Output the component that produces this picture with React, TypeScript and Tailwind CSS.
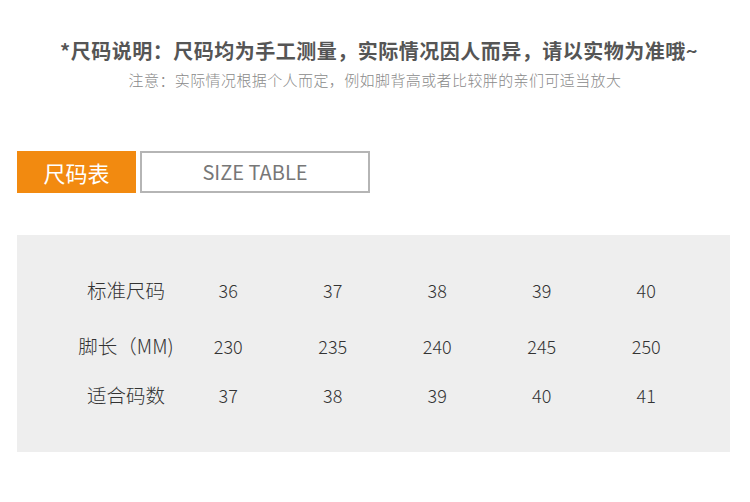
const rows = [
  { label: '标准尺码', values: ['36', '37', '38', '39', '40'], mt: 'mt-0' },
  { label: '脚长（MM)', values: ['230', '235', '240', '245', '250'], mt: 'mt-[26px]' },
  { label: '适合码数', values: ['37', '38', '39', '40', '41'], mt: 'mt-[19px]' },
];

export default function App() {
  return (
    <div
      className="w-[750px] h-[502px] bg-white overflow-hidden"
      style={{ fontFamily: '"Noto Sans CJK SC", "Noto Sans", sans-serif' }}
    >
      {/* Header notes */}
      <div className="pt-[37px] flex flex-col items-center">
        <div className="text-[20px] leading-[28px] font-bold text-[#555555] tracking-[0.5px] pl-[8px]">
          *尺码说明：尺码均为手工测量，实际情况因人而异，请以实物为准哦~
        </div>
        <div className="mt-[3px] text-[15px] leading-[24px] text-[#8a8a8a] tracking-[0.4px] font-light">
          注意：实际情况根据个人而定，例如脚背高或者比较胖的亲们可适当放大
        </div>
      </div>

      {/* Tabs */}
      <div className="mt-[59px] ml-[17px] flex gap-[4px]">
        <div className="w-[119px] h-[42px] bg-[#f28a10] text-white text-[22px] flex items-center justify-center">
          尺码表
        </div>
        <div className="w-[230px] h-[42px] border-2 border-[#b5b5b5] text-[#777777] text-[20px] flex items-center justify-center">
          SIZE TABLE
        </div>
      </div>

      {/* Table panel */}
      <div className="mt-[42px] ml-[17px] w-[713px] h-[217px] bg-[#eeeeee] pl-[59px] pt-[40px] flex flex-col">
        {rows.map((r) => (
          <div key={r.label} className={`${r.mt} flex h-[30px] items-center text-[18px] text-[#333333] font-light`}>
            <div className="w-[100px] text-center whitespace-nowrap text-[19.5px]">{r.label}</div>
            {r.values.map((v) => (
              <div key={v} className="w-[104.5px] text-center">
                {v}
              </div>
            ))}
          </div>
        ))}
      </div>
    </div>
  );
}
